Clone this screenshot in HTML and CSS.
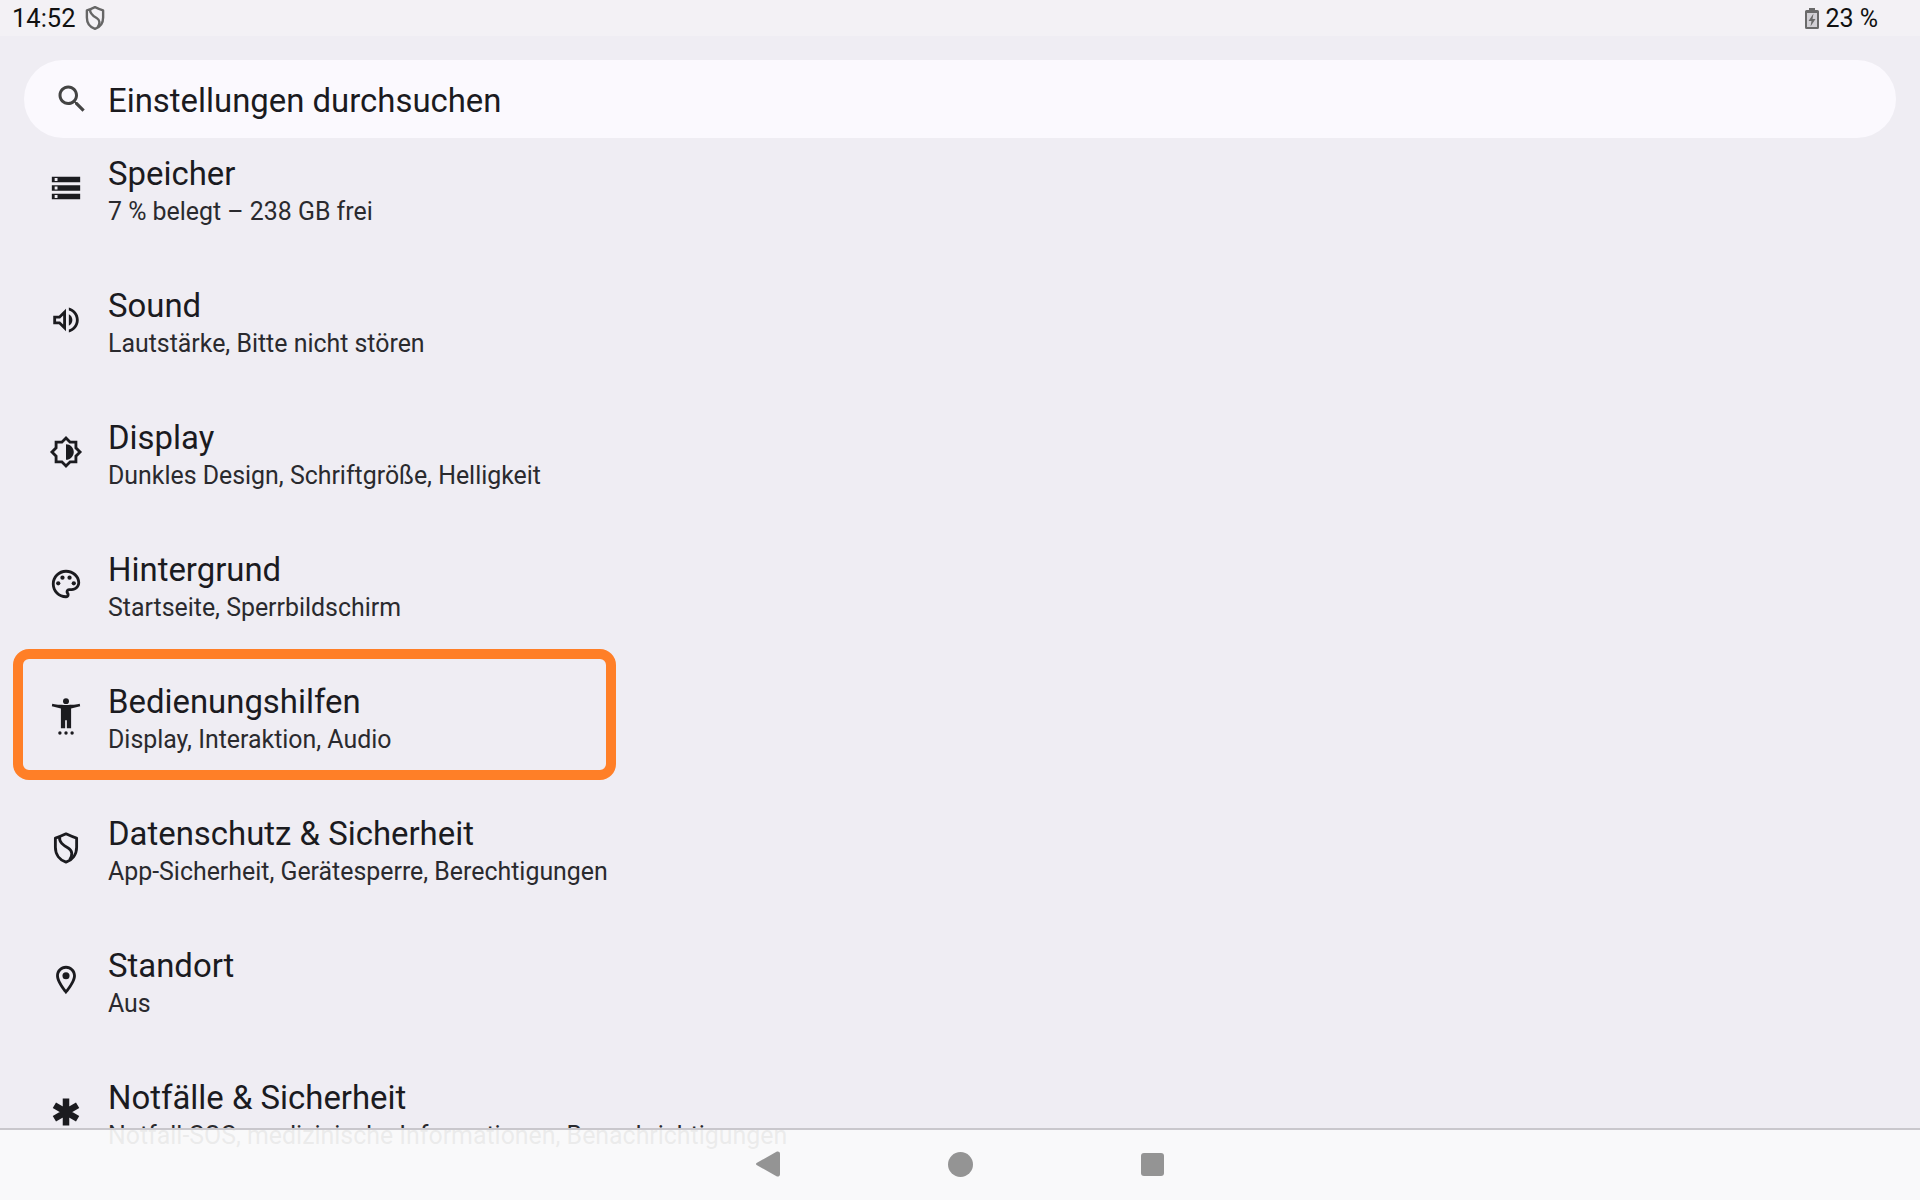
FILE: index.html
```html
<!DOCTYPE html>
<html lang="de">
<head>
<meta charset="utf-8">
<title>Einstellungen</title>
<link rel="stylesheet" href="styles.css">
</head>
<body>
<div class="screen">
  <header class="status">
    <div class="status-left">
      <span class="status-text">14:52</span>
      <svg class="status-shield" viewBox="0 0 24 24"><path d="M12 2C14.500 3.200 17 4.300 19.500 5V11.500C19.500 16.500 16.500 20.500 12 22 7.500 20.500 4.500 16.500 4.500 11.500V5C7 4.300 9.500 3.200 12 2Z"/><path d="M7.500 4C7 8 10 10 13.500 12 16.500 13.800 17 17 14.500 20.500"/></svg>
    </div>
    <div class="status-right">
      <svg class="status-battery" viewBox="0 0 14 21"><path d="M4 0h6v2h2.500A1.500 1.500 0 0 1 14 3.500V19.500A1.500 1.500 0 0 1 12.500 21H1.500A1.500 1.500 0 0 1 0 19.500V3.500A1.500 1.500 0 0 1 1.500 2H4z"/><path class="battery-window" d="M2 5h10v14H2z"/><path d="M8.500 5.500 3.500 13h3L5.500 18.500 10.500 11h-3z"/></svg>
      <span class="status-text status-percent">23 %</span>
    </div>
  </header>

  <main class="content">
    <div class="search">
      <svg class="search-icon" viewBox="0 0 24 24"><path d="M15.500 14h-.79l-.28-.27C15.410 12.590 16 11.110 16 9.500 16 5.910 13.090 3 9.500 3S3 5.910 3 9.500 5.910 16 9.500 16c1.610 0 3.090-.59 4.230-1.570l.27.28v.79l5 4.990L20.490 19l-4.990-5zm-6 0C7.010 14 5 11.990 5 9.500S7.010 5 9.500 5 14 7.010 14 9.500 11.990 14 9.500 14z"/></svg>
      <span class="search-text">Einstellungen durchsuchen</span>
    </div>

    <ul class="list">
      <li class="row">
        <svg class="icon" viewBox="0 0 24 24"><path d="M2 20h20v-4H2v4zm2-3h2v2H4v-2zM2 4v4h20V4H2zm4 3H4V5h2v2zm-4 7h20v-4H2v4zm2-3h2v2H4v-2z"/></svg>
        <div class="texts"><div class="title">Speicher</div><div class="sub">7 % belegt – 238 GB frei</div></div>
      </li>
      <li class="row">
        <svg class="icon" viewBox="0 0 24 24"><path d="M3 9v6h4l5 5V4L7 9H3zm7-.17v6.340L7.830 13H5v-2h2.830L10 8.830zM16.500 12c0-1.770-1.020-3.290-2.500-4.030v8.050c1.480-.73 2.500-2.250 2.500-4.020zM14 3.230v2.060c2.890.86 5 3.540 5 6.710s-2.110 5.850-5 6.710v2.060c4.010-.91 7-4.490 7-8.770s-2.990-7.860-7-8.770z"/></svg>
        <div class="texts"><div class="title">Sound</div><div class="sub">Lautstärke, Bitte nicht stören</div></div>
      </li>
      <li class="row">
        <svg class="icon" viewBox="0 0 24 24"><path d="M20 15.310 23.310 12 20 8.690V4h-4.690L12 .69 8.690 4H4v4.690L.69 12 4 15.310V20h4.690L12 23.310 15.310 20H20v-4.690zm-2-.83V18h-3.520L12 20.480 9.520 18H6v-3.520L3.520 12 6 9.520V6h3.520L12 3.520 14.480 6H18v3.520L20.480 12 18 14.480zM12 6.500v11c3.030 0 5.500-2.470 5.500-5.500S15.030 6.500 12 6.500z"/></svg>
        <div class="texts"><div class="title">Display</div><div class="sub">Dunkles Design, Schriftgröße, Helligkeit</div></div>
      </li>
      <li class="row">
        <svg class="icon" viewBox="0 0 24 24"><path d="M12 22C6.490 22 2 17.510 2 12S6.490 2 12 2s10 4.040 10 9c0 3.310-2.690 6-6 6h-1.770c-.28 0-.5.22-.5.5 0 .12.05.23.13.33.41.47.64 1.060.64 1.670 0 1.380-1.120 2.500-2.500 2.500zm0-18c-4.410 0-8 3.590-8 8s3.590 8 8 8c.28 0 .5-.22.5-.5 0-.16-.08-.28-.14-.35-.41-.46-.63-1.050-.63-1.650 0-1.380 1.120-2.500 2.500-2.500H16c2.210 0 4-1.790 4-4 0-3.860-3.590-7-8-7z"/><circle cx="6.500" cy="11.500" r="1.500"/><circle cx="9.500" cy="7.500" r="1.500"/><circle cx="14.500" cy="7.500" r="1.500"/><circle cx="17.500" cy="11.500" r="1.500"/></svg>
        <div class="texts"><div class="title">Hintergrund</div><div class="sub">Startseite, Sperrbildschirm</div></div>
      </li>
      <li class="row">
        <svg class="icon" viewBox="0 0 24 24"><circle cx="12" cy="1.500" r="2.100"/><path d="M2.300 3.400C6 4.500 18 4.500 21.700 3.400L22 5.200 15.600 6.700V20.600H12.600V15H11.400V20.600H8.400V6.700L2 5.200z"/><circle cx="7.700" cy="24" r="1.200"/><circle cx="12" cy="24" r="1.200"/><circle cx="16.300" cy="24" r="1.200"/></svg>
        <div class="texts"><div class="title">Bedienungshilfen</div><div class="sub">Display, Interaktion, Audio</div></div>
        <div class="highlight"></div>
      </li>
      <li class="row">
        <svg class="icon" viewBox="0 0 24 24"><path class="outline" d="M12 2C14.500 3.200 17 4.300 19.500 5V11.500C19.500 16.500 16.500 20.500 12 22 7.500 20.500 4.500 16.500 4.500 11.500V5C7 4.300 9.500 3.200 12 2Z"/><path class="outline" d="M7.500 4C7 8 10 10 13.500 12 16.500 13.800 17 17 14.500 20.500"/></svg>
        <div class="texts"><div class="title">Datenschutz &amp; Sicherheit</div><div class="sub">App-Sicherheit, Gerätesperre, Berechtigungen</div></div>
      </li>
      <li class="row">
        <svg class="icon" viewBox="0 0 24 24"><path d="M12 2C8.130 2 5 5.130 5 9c0 5.250 7 13 7 13s7-7.750 7-13c0-3.870-3.130-7-7-7zM7 9c0-2.760 2.240-5 5-5s5 2.240 5 5c0 2.880-2.880 7.190-5 9.880C9.920 16.210 7 11.850 7 9z"/><circle cx="12" cy="9" r="2.500"/></svg>
        <div class="texts"><div class="title">Standort</div><div class="sub">Aus</div></div>
      </li>
      <li class="row">
        <svg class="icon" viewBox="0 0 24 24"><path class="star" d="M12 2.500v19M3.800 7.250l16.400 9.500M3.800 16.750l16.400-9.500"/></svg>
        <div class="texts"><div class="title">Notfälle &amp; Sicherheit</div><div class="sub">Notfall-SOS, medizinische Informationen, Benachrichtigungen</div></div>
      </li>
    </ul>
  </main>

  <nav class="nav">
    <span class="nav-slot"><svg class="nav-back" viewBox="0 0 24 26"><path d="M1 11.700 20.500.7C22 0 24 .6 24 2.800v20.400c0 2.200-2 2.800-3.500 2.100L1 14.300c-1.300-.7-1.300-1.900 0-2.600z"/></svg></span>
    <span class="nav-slot"><span class="nav-home"></span></span>
    <span class="nav-slot"><span class="nav-recent"></span></span>
  </nav>
</div>
</body>
</html>
```

FILE: styles.css
```css
* { box-sizing: border-box; }
html, body { margin: 0; padding: 0; }
body { font-family: Roboto, "Liberation Sans", sans-serif; color: #1b1b1f; background: #efedf3; }
.screen { position: relative; width: 1920px; height: 1200px; overflow: hidden; display: flex; flex-direction: column; background: #efedf3; }

.status { flex: 0 0 36px; height: 36px; display: flex; justify-content: space-between; align-items: center; padding: 0 42px 0 12px; background: #f3f1f5; }
.status-left, .status-right { display: flex; align-items: center; height: 36px; }
.status-text { font-size: 25.500px; line-height: 36px; color: #111; }
.status-percent { font-size: 25px; line-height: 34px; padding-top: 2px; }
.status-shield { width: 26px; height: 26px; margin-left: 6px; fill: none; stroke: #666; stroke-width: 2.200; stroke-linejoin: round; }
.status-battery { width: 14px; height: 21px; margin-right: 6px; fill: #6a6a6a; }
.battery-window { fill: #d2d0d5; }

.content { flex: 1; min-height: 0; display: flex; flex-direction: column; }
.search { flex: 0 0 78px; margin: 24px 24px 0; display: flex; align-items: center; padding: 0 0 0 30px; background: #fbf9fe; border-radius: 39px; }
.search-icon { width: 36px; height: 36px; fill: #444; }
.search-text { margin: 2px 0 0 18px; font-size: 32.900px; color: #1b1b1f; }

.list { list-style: none; margin: 0; padding: 0; flex: 1; min-height: 0; }
.row { position: relative; height: 132px; display: flex; align-items: flex-start; padding: 17px 0 0 49px; }
.icon { width: 34px; height: 34px; margin-top: 16px; fill: #1b1b1f; flex: none; overflow: visible; }
.outline { fill: none; stroke: #1b1b1f; stroke-width: 2; stroke-linejoin: round; }
.star { fill: none; stroke: #1b1b1f; stroke-width: 4.600; }
.texts { margin-left: 25px; }
.title { font-size: 32.900px; line-height: 38px; color: #1b1b1f; }
.sub { font-size: 24.900px; line-height: 38px; color: #2a2a2e; }
.highlight { position: absolute; left: 13px; top: -17px; width: 603px; height: 131px; border: 10px solid #ff7f27; border-radius: 16px; }

.nav { position: absolute; left: 0; right: 0; bottom: 0; height: 72px; display: flex; justify-content: center; align-items: center; padding-bottom: 2px; border-top: 2px solid #c9c7cc; background: rgba(250, 250, 250, .93); }
.nav-slot { width: 192px; display: flex; justify-content: center; align-items: center; }
.nav-back { width: 24px; height: 26px; fill: #949494; }
.nav-home { width: 25px; height: 25px; border-radius: 50%; background: #949494; }
.nav-recent { width: 23px; height: 23px; border-radius: 3px; background: #949494; }
```
